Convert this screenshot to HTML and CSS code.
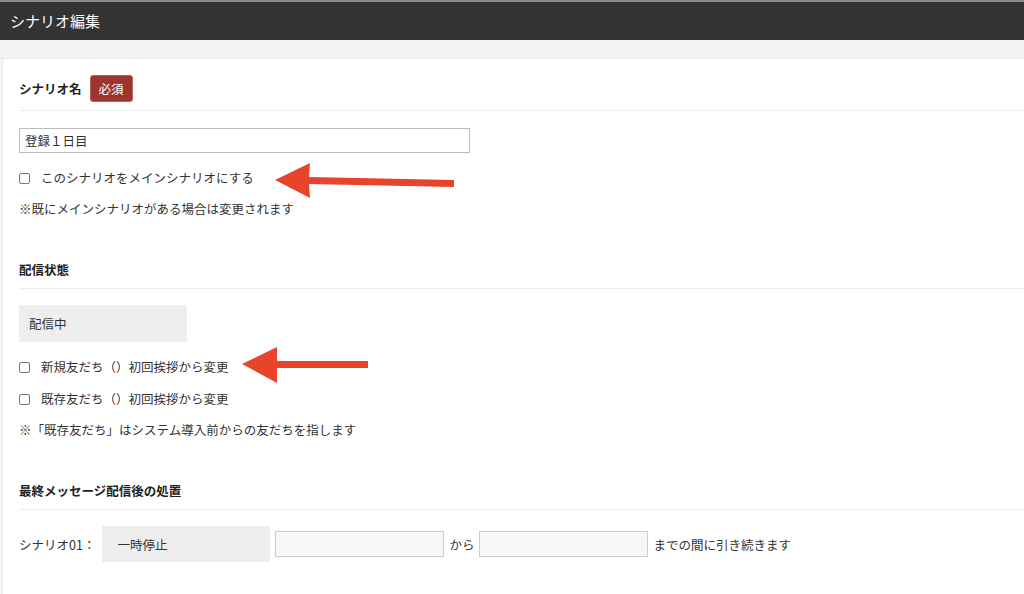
FILE: index.html
```html
<html>
<head>
<meta charset="utf-8">
<link rel="stylesheet" href="styles.css">
</head>
<body>
	<header class="page-header">
		<h1>シナリオ編集</h1>
	</header>

	<main class="page-body">
		<div class="card">

			<section class="block">
				<h2 class="block-title">シナリオ名 <span class="badge">必須</span></h2>
				<input class="text-input" type="text" value="登録１日目">
				<label class="check-row first">
					<input type="checkbox">
					<span>このシナリオをメインシナリオにする</span>
				</label>
				<p class="note">※既にメインシナリオがある場合は変更されます</p>
			</section>

			<section class="block">
				<h2 class="block-title">配信状態</h2>
				<div class="select-box">配信中</div>
				<label class="check-row first">
					<input type="checkbox">
					<span>新規友だち（）初回挨拶から変更</span>
				</label>
				<label class="check-row">
					<input type="checkbox">
					<span>既存友だち（）初回挨拶から変更</span>
				</label>
				<p class="note">※「既存友だち」はシステム導入前からの友だちを指します</p>
			</section>

			<section class="block">
				<h2 class="block-title">最終メッセージ配信後の処置</h2>
				<div class="after-row">
					<span class="row-label">シナリオ01：</span>
					<div class="select-box small">一時停止</div>
					<input class="date-input" type="text">
					<span>から</span>
					<input class="date-input" type="text">
					<span>までの間に引き続きます</span>
				</div>
			</section>

		</div>
	</main>

	<!-- annotation arrows -->
	<svg class="annotations" width="1024" height="594" viewBox="0 0 1024 594">
		<polygon points="275,180 310,163 309,177 454,180 454,187 309,184 310,198" />
		<polygon points="242,364 277,347 277,361 368,361 368,368 277,368 277,383" />
	</svg>
</body>
</html>
```

FILE: styles.css
```css
body {
	margin: 0;
	background: #f4f4f4;
	font-family: "Noto Sans CJK JP", "Noto Sans", sans-serif;
	font-size: 12.5px;
	color: #333;
	position: relative;
	height: 594px;
	overflow: hidden;
}

.page-header {
	border-top: 2px solid #8a8a8a;
	background: #333;
	height: 38px;
	display: flex;
	align-items: center;
	padding: 0 10px;
}

.page-header h1 {
	margin: 0;
	font-size: 15px;
	font-weight: normal;
	color: #fff;
	line-height: 20px;
}

.page-body {
	padding: 18px 0 0 2px;
}

.card {
	background: #fff;
	border-top: 1px solid #ececec;
	border-left: 1px solid #e8e8e8;
	padding: 0 0 60px 16px;
	min-height: 560px;
}

.block {
	padding-top: 16px;
	padding-bottom: 31px;
}

.block + .block {
	padding-top: 10px;
}

.block-title {
	margin: 0;
	font-size: 12.5px;
	font-weight: bold;
	color: #222;
	line-height: 20px;
	display: flex;
	align-items: center;
	gap: 8px;
	padding-bottom: 8px;
	border-bottom: 1px solid #ededed;
}

.badge {
	display: inline-block;
	background: #9c3430;
	color: #fff;
	font-weight: normal;
	border-radius: 3px;
	padding: 0 8px;
	line-height: 25px;
	height: 27px;
	border: 1px solid #b9615c;
	box-sizing: border-box;
}

.text-input {
	display: block;
	margin-top: 17px;
	width: 451px;
	height: 25px;
	box-sizing: border-box;
	border: 1px solid #bdbdbd;
	padding: 0 5px;
	font-family: inherit;
	font-size: 12.5px;
	color: #333;
	outline: none;
}

.check-row {
	display: flex;
	align-items: center;
	gap: 11px;
	line-height: 20px;
	margin-top: 12px;
}

.check-row.first {
	margin-top: 15px;
}

.check-row input {
	appearance: none;
	-webkit-appearance: none;
	width: 11px;
	height: 11px;
	margin: 0;
	border: 1px solid #777;
	border-radius: 2px;
	background: #fff;
}

.note {
	margin: 11px 0 0;
	line-height: 20px;
}

.select-box {
	margin-top: 16px;
	width: 168px;
	height: 37px;
	box-sizing: border-box;
	background: #eee;
	padding: 0 10px;
	display: flex;
	align-items: center;
}

.select-box.small {
	margin-top: 0;
	height: 36px;
	padding: 0 15px;
}

.after-row {
	margin-top: 16px;
	display: flex;
	align-items: center;
	gap: 5px;
}

.row-label {
	margin-right: 2px;
}

.date-input {
	width: 169px;
	height: 26px;
	box-sizing: border-box;
	border: 1px solid #ccc;
	background: #f7f7f7;
	margin: 0;
	outline: none;
}

.annotations {
	position: absolute;
	left: 0;
	top: 0;
	pointer-events: none;
}

.annotations polygon {
	fill: #e8442b;
}
```
